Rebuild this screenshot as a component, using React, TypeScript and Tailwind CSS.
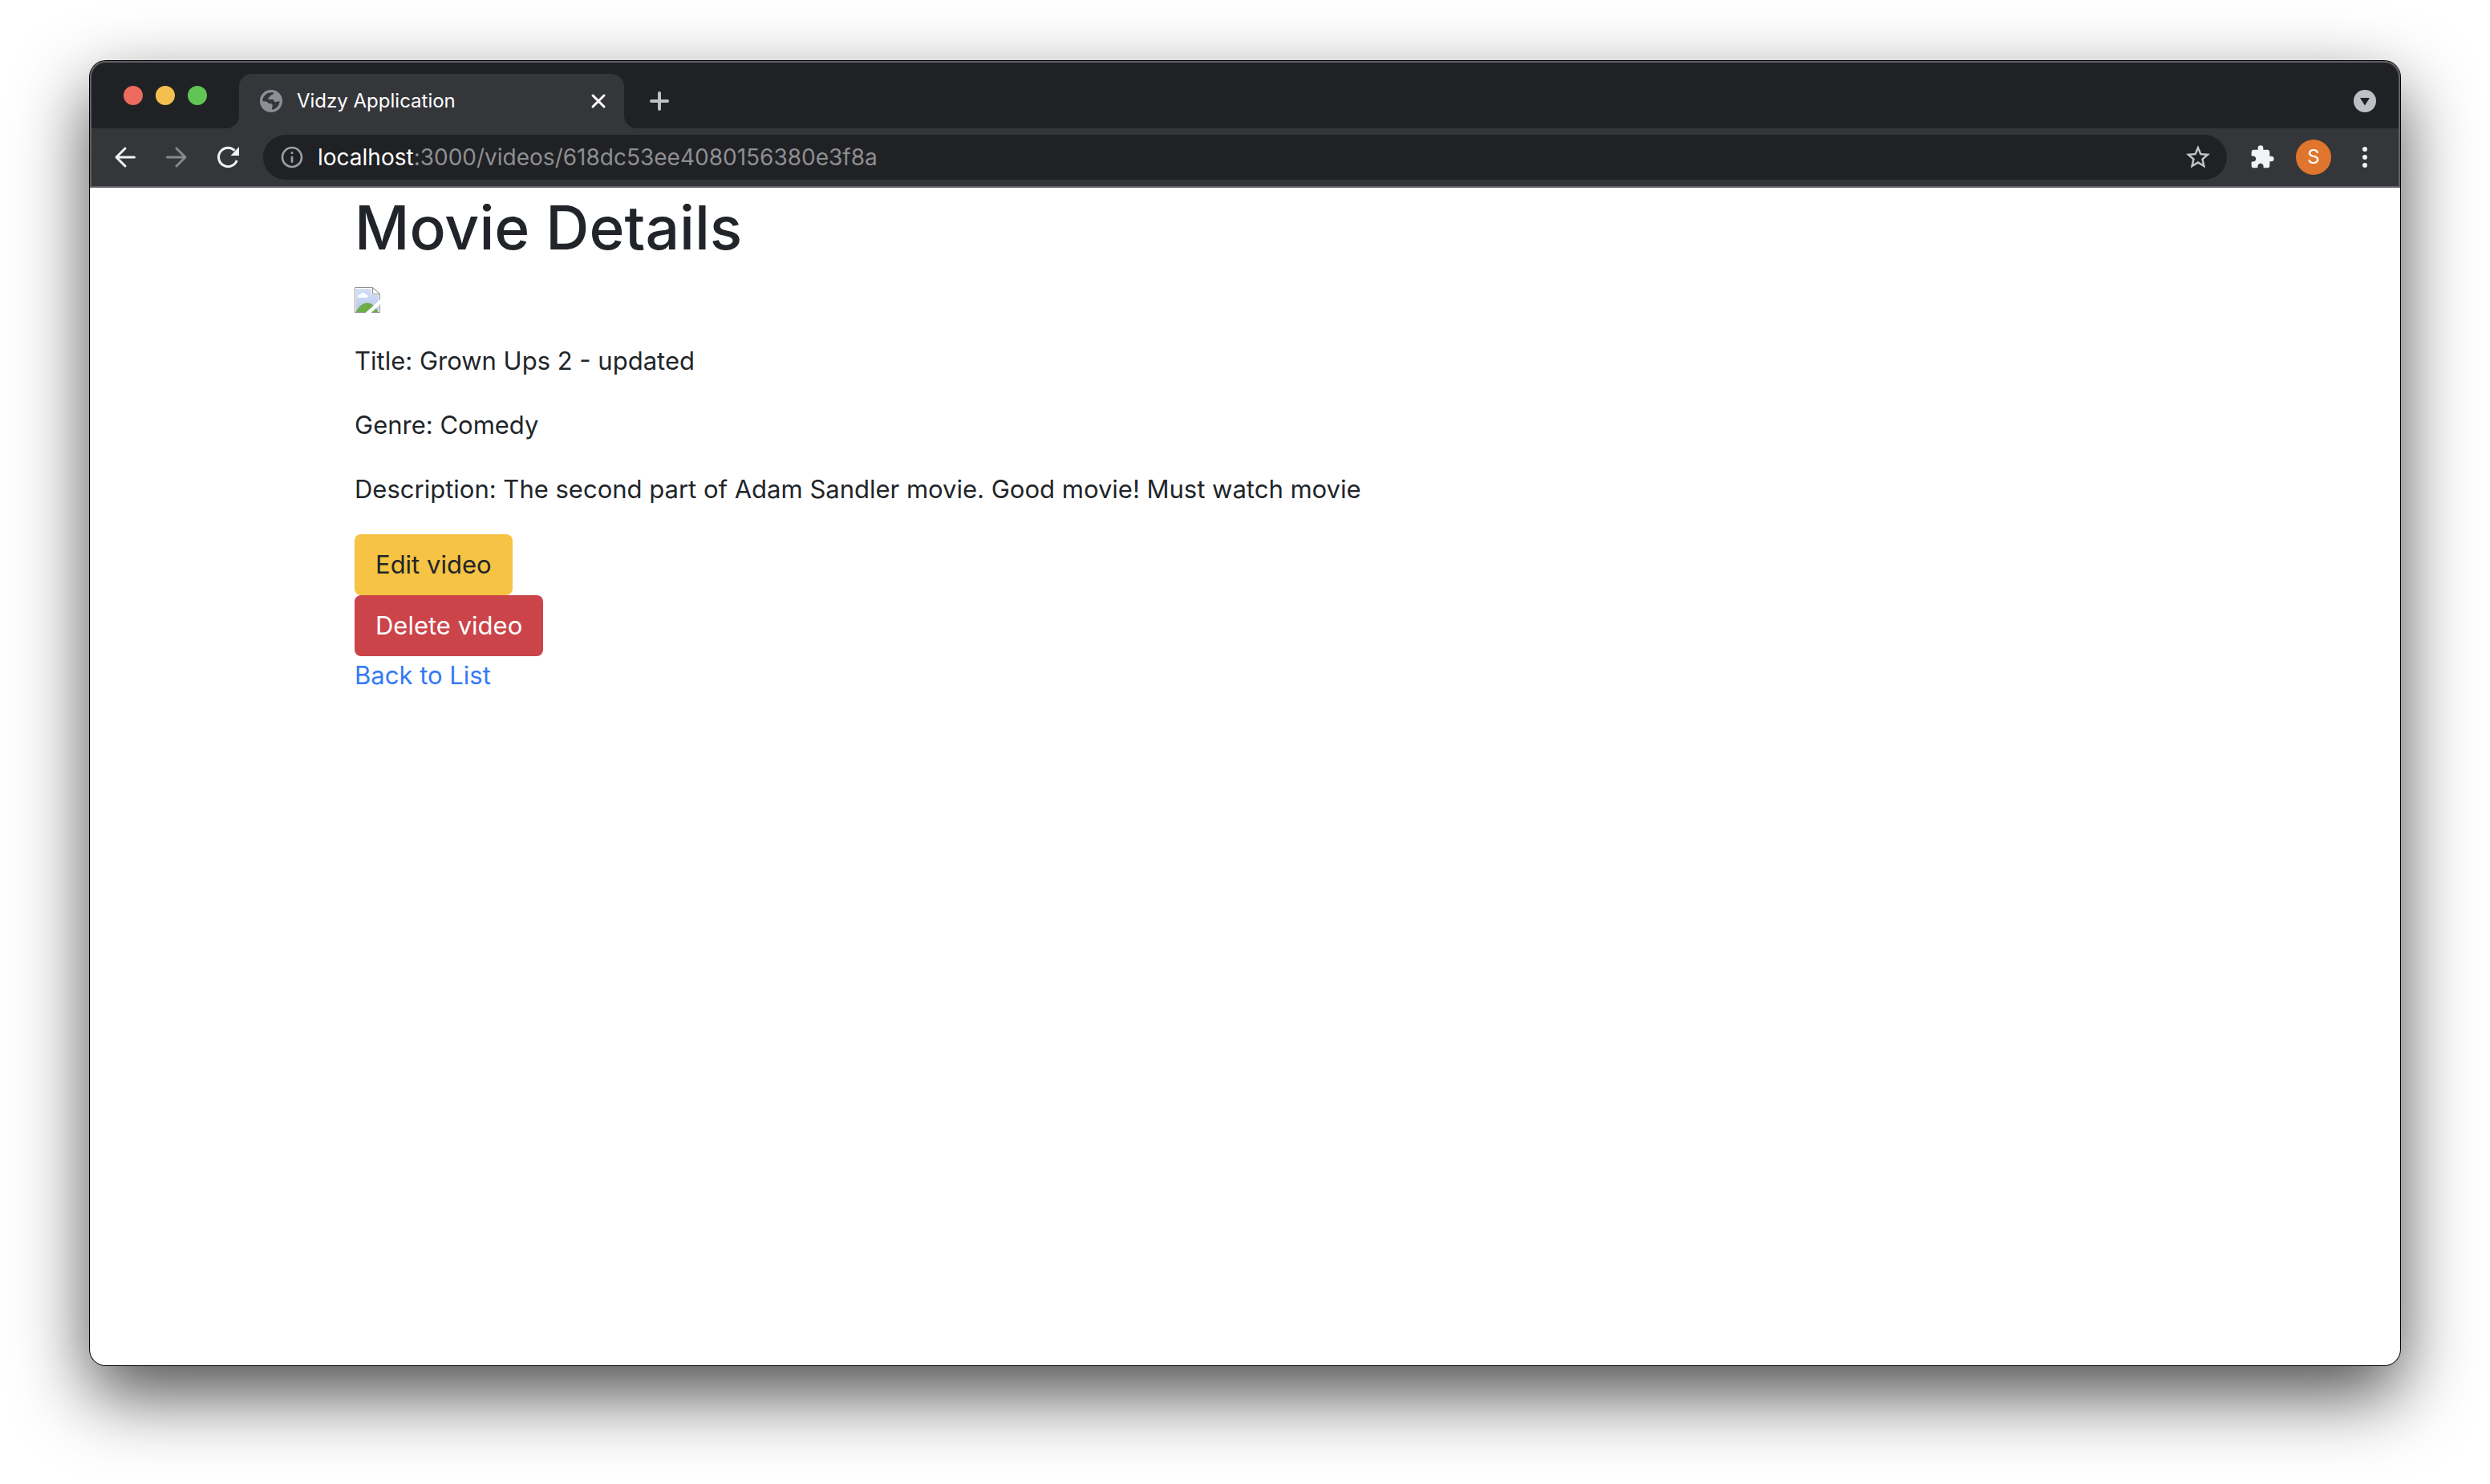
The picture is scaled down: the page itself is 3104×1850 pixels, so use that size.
import { MdExtension, MdInfoOutline, MdStarBorder } from "react-icons/md";

function TabCurve({ className }: { className: string }) {
  return (
    <svg viewBox="0 0 16 16" className={className} aria-hidden="true">
      <path d="M16 0V16H0A16 16 0 0 0 16 0Z" fill="#35363a" />
    </svg>
  );
}

function Globe() {
  return (
    <svg viewBox="0 0 28 28" className="size-7 shrink-0" aria-hidden="true">
      <circle cx="14" cy="14" r="14" fill="#8b9097" />
      <path
        d="M17 3.6C17 5.5 16 6.5 13.500 6.600C13 8.600 12.200 9.300 10.600 9.400V12H15.500C17 12 17.600 13 17.800 14.800C19.500 15.500 21 15.400 22 14.200L24.600 14.500C24.300 19.500 20.500 24 15 24.700C14.500 22.500 15.800 21.500 15.800 19.500C15.500 17.500 14 16.800 10.500 16.800C9.500 14.500 7.500 14 3.300 14.200C3.200 7.500 9.500 2.200 17 3.600Z"
        fill="#35363a"
      />
    </svg>
  );
}

function BrokenImage() {
  return (
    <svg viewBox="0 0 32 32" className="size-8" role="img" aria-label="Movie poster">
      <defs>
        <linearGradient id="sky" x1="0" y1="0" x2="0" y2="1">
          <stop offset="0" stopColor="#d3e0f8" />
          <stop offset="1" stopColor="#b9c7ea" />
        </linearGradient>
      </defs>
      <path d="M.5.5H22.500L31.500 8.500V31.500H.5Z" fill="#fff" stroke="#8f8f8f" />
      <path d="M2 2H21V9.500H30V30H2Z" fill="url(#sky)" />
      <path d="M22.500.5V8.500H31.500Z" fill="#fff" stroke="#8f8f8f" />
      <path d="M4 13a3 3 0 0 1 3-4 4 4 0 0 1 7 0 2.500 2.500 0 0 1 2 4Z" fill="#fff" />
      <path d="M1.500 31C6 23 11 19.500 16 19.500S26 24 29.500 31Z" fill="#6fac48" />
      <path d="M32 15.500V21.500L20.500 32H13.500Z" fill="#fff" />
    </svg>
  );
}

function Stroke({ d, className }: { d: string; className: string }) {
  return (
    <svg viewBox="0 0 32 32" className={className} fill="none" stroke="currentColor" strokeWidth="3" strokeLinecap="round" strokeLinejoin="round" aria-hidden="true">
      <path d={d} />
    </svg>
  );
}

function TabStrip() {
  return (
    <div className="flex h-[84px] items-end bg-[#202124] pr-[30px]">
      <div className="flex h-[82px] items-center gap-4 self-start pt-1 pl-[42px]">
        <button aria-label="Close window" className="size-6 rounded-full bg-[#ed6a5e]" />
        <button aria-label="Minimize window" className="size-6 rounded-full bg-[#f5bf4f]" />
        <button aria-label="Zoom window" className="size-6 rounded-full bg-[#61c554]" />
      </div>
      <TabCurve className="ml-6 size-4 shrink-0" />
      <div className="flex h-[68px] w-[480px] items-center rounded-t-2xl bg-[#35363a] pr-4 pl-[26px]">
        <Globe />
        <span className="ml-[18px] flex-1 text-2xl text-white">Vidzy Application</span>
        <button aria-label="Close tab" className="text-white">
          <Stroke className="size-8" d="M9 9L23 23M23 9L9 23" />
        </button>
      </div>
      <TabCurve className="size-4 shrink-0 -scale-x-100" />
      <div className="flex h-[68px] flex-1 items-center justify-between pl-3">
        <button aria-label="New tab" className="text-[#bdc1c6]">
          <svg viewBox="0 0 32 32" className="size-8" stroke="currentColor" strokeWidth="4" strokeLinecap="round" aria-hidden="true">
            <path d="M6 16H26M16 6V26" />
          </svg>
        </button>
        <button aria-label="Search tabs">
          <svg viewBox="0 0 28 28" className="size-7" aria-hidden="true">
            <circle cx="14" cy="14" r="14" fill="#bdc1c6" />
            <path d="M8 10H20L14 19.500Z" fill="#202124" />
          </svg>
        </button>
      </div>
    </div>
  );
}

function Toolbar() {
  return (
    <div className="flex h-[74px] items-center border-b-2 border-[#5f6064] bg-[#35363a] pr-7 pl-7">
      <div className="flex gap-8">
        <button aria-label="Back" className="text-[#f1f3f4]">
          <Stroke className="size-8" d="M27.500 16H5.500M16 5L5 16L16 27" />
        </button>
        <button aria-label="Forward" className="text-[#87888a]">
          <Stroke className="size-8" d="M4.500 16H26.500M16 5L27 16L16 27" />
        </button>
        <button aria-label="Reload" className="text-[#f1f3f4]">
          <svg viewBox="0 0 32 32" className="size-8" aria-hidden="true">
            <path d="M27.200 20A11.700 11.700 0 1 1 24.500 7.600" fill="none" stroke="currentColor" strokeWidth="3" />
            <path d="M30 3V14H19.500Z" fill="currentColor" />
          </svg>
        </button>
      </div>
      <div className="ml-7 flex h-14 flex-1 items-center rounded-full bg-[#202124] pr-[18px] pl-5">
        <button aria-label="View site information" className="text-[#9aa0a6]">
          <MdInfoOutline className="size-8" />
        </button>
        <div role="textbox" aria-label="Address" className="ml-4 flex-1 text-[28px] leading-9 text-[#8e8f91]">
          <span className="text-white">localhost</span>:3000/videos/618dc53ee4080156380e3f8a
        </div>
        <button aria-label="Bookmark this page" className="text-[#c4c5c6]">
          <MdStarBorder className="size-9" />
        </button>
      </div>
      <button aria-label="Extensions" className="ml-7 text-[#f1f3f4]">
        <MdExtension className="size-8" />
      </button>
      <button aria-label="Profile" className="ml-[26px] size-11 rounded-full bg-[#e0752d] text-2xl text-white">S</button>
      <button aria-label="Menu" className="ml-[26px] text-[#f1f3f4]">
        <svg viewBox="0 0 32 32" className="size-8" fill="currentColor" aria-hidden="true">
          <circle cx="16" cy="6" r="3" />
          <circle cx="16" cy="16" r="3" />
          <circle cx="16" cy="26" r="3" />
        </svg>
      </button>
    </div>
  );
}

export default function App() {
  return (
    <div className="flex min-h-screen bg-white px-28 pt-[76px] pb-[148px] font-['Inter',sans-serif]">
      <div className="flex flex-1 flex-col overflow-hidden rounded-[20px] bg-white shadow-[0_0_0_1px_#000,0_36px_90px_rgba(0,0,0,0.7)]">
        <header className="relative">
          <TabStrip />
          <Toolbar />
          <div className="pointer-events-none absolute inset-0 rounded-t-[20px] border-x-2 border-t-2 border-[#5f6064]" />
        </header>
        <main className="mx-auto w-full max-w-[2280px] px-[30px] text-[31px] leading-[48px] text-[#212529]">
          <h1 className="mb-3 text-[75px] leading-[100px] font-medium">Movie Details</h1>
          <div className="flex h-12 items-end pb-1">
            <BrokenImage />
          </div>
          <p className="my-8">Title: Grown Ups 2 - updated</p>
          <p className="my-8">Genre: Comedy</p>
          <p className="my-8">Description: The second part of Adam Sandler movie. Good movie! Must watch movie</p>
          <div className="flex flex-col items-start">
            <a href="#edit" className="rounded-lg bg-[#f6c344] px-[26px] py-[14px]">Edit video</a>
            <button className="rounded-lg bg-[#cb444a] px-[26px] py-[14px] text-white">Delete video</button>
            <a href="#list" className="text-[#347af6]">Back to List</a>
          </div>
        </main>
      </div>
    </div>
  );
}
